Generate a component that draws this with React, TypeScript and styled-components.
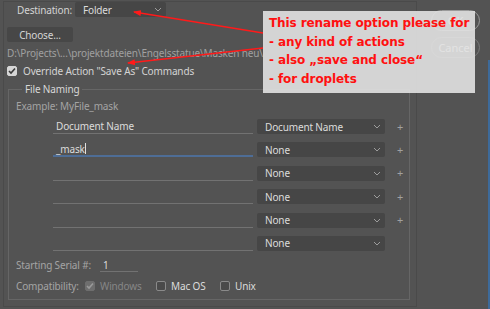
import styled, { createGlobalStyle } from 'styled-components'

const GlobalStyle = createGlobalStyle`
  html, body {
    margin: 0;
    padding: 0;
    background: #535353;
  }
`

const Screen = styled.div`
  position: relative;
  width: 490px;
  height: 309px;
  overflow: hidden;
  display: flex;
  background: #535353;
  color: #d4d4d4;
  font-family: "Noto Sans", "Open Sans", sans-serif;
  font-size: 10px;
  letter-spacing: -0.15px;
  line-height: 14px;
`

const Panel = styled.div`
  box-sizing: border-box;
  margin: 1px 0 0 3px;
  width: 414px;
  height: 306px;
  border: 1px solid #4a4a4a;
  display: flex;
  flex-direction: column;
  align-items: flex-start;
`

const DestRow = styled.div`
  display: flex;
  align-items: center;
  margin-left: 13px;
  height: 15px;
`

const Label = styled.span<{ $dim?: boolean; $w?: number }>`
  display: inline-block;
  width: ${p => (p.$w ? `${p.$w}px` : 'auto')};
  color: ${p => (p.$dim ? '#a4a4a4' : '#d4d4d4')};
  white-space: nowrap;
`

const Select = styled.div<{ $w: number }>`
  box-sizing: border-box;
  width: ${p => p.$w}px;
  height: 15px;
  padding: 0 4px 0 8px;
  display: flex;
  align-items: center;
  justify-content: space-between;
  background: #464646;
  border-radius: 2px;
  color: #dcdcdc;
`

const ChooseButton = styled.button`
  box-sizing: border-box;
  margin: 10px 0 0 3px;
  width: 66px;
  height: 15px;
  padding: 0;
  border: none;
  border-radius: 2px;
  background: #474747;
  color: #d4d4d4;
  font: inherit;
  letter-spacing: inherit;
`

const PathText = styled.div`
  margin: 4px 0 0 3px;
  color: #a0a0a0;
  white-space: nowrap;
`

const CheckRow = styled.label`
  display: flex;
  align-items: center;
  gap: 6px;
  margin: 4px 0 0 3px;
  height: 14px;
`

const Box = styled.span<{ $checked?: boolean; $disabled?: boolean }>`
  box-sizing: border-box;
  flex: none;
  width: 10px;
  height: 10px;
  border-radius: 2px;
  display: inline-flex;
  align-items: center;
  justify-content: center;
  background: ${p => (p.$disabled ? '#6e6e6e' : p.$checked ? '#d6d6d6' : '#4a4a4a')};
  border: 1px solid ${p => (p.$disabled ? '#6e6e6e' : p.$checked ? '#d6d6d6' : '#8a8a8a')};
`

const Group = styled.fieldset`
  box-sizing: border-box;
  margin: 4px 0 0 4px;
  padding: 0;
  width: 402px;
  height: 218px;
  border: 1px solid #666666;
  min-inline-size: 0;
`

const Legend = styled.legend`
  margin-left: 13px;
  padding: 0 3px;
  color: #d8d8d8;
  line-height: 14px;
`

const Example = styled.div`
  margin: 3px 0 0 7px;
  color: #a4a4a4;
`

const NameGrid = styled.div`
  display: grid;
  grid-template-columns: 200px 128px 10px;
  column-gap: 4px;
  row-gap: 8.4px;
  margin: 6px 0 0 44px;
  align-items: center;
`

const TextField = styled.div<{ $active?: boolean }>`
  box-sizing: border-box;
  height: 15px;
  padding-left: 3px;
  border-bottom: ${p => (p.$active ? '2px solid #4e6d96' : '1px solid #727272')};
  color: #dcdcdc;
  display: flex;
  align-items: center;
`

const Caret = styled.span`
  display: inline-block;
  width: 1px;
  height: 11px;
  background: #e0e0e0;
`

const Plus = styled.span`
  margin-left: 8px;
  color: #a0a0a0;
  font-size: 11px;
`

const BottomRow = styled.div`
  display: flex;
  align-items: center;
  margin: 7px 0 0 7px;
  height: 14px;
`

const SerialInput = styled.div`
  box-sizing: border-box;
  width: 38px;
  height: 14px;
  padding-left: 3px;
  border-bottom: 1px solid #727272;
  color: #dcdcdc;
`

const CompatItem = styled.span<{ $disabled?: boolean; $w?: number }>`
  display: inline-flex;
  align-items: center;
  gap: 5px;
  width: ${p => (p.$w ? `${p.$w}px` : 'auto')};
  color: ${p => (p.$disabled ? '#868686' : '#dcdcdc')};
`

const ButtonColumn = styled.div`
  display: flex;
  flex-direction: column;
  margin-left: 14px;
  width: 49px;
`

const DialogButton = styled.button<{ $primary?: boolean }>`
  box-sizing: border-box;
  height: 21px;
  margin-top: ${p => (p.$primary ? 10 : 6)}px;
  border-radius: 11px;
  border: 1px solid ${p => (p.$primary ? '#9a9a9a' : '#7a7a7a')};
  background: transparent;
  color: #e0e0e0;
  font: inherit;
  font-size: 11px;
`

const BlueEdge = styled.div`
  margin: 60px 0 0 auto;
  width: 2px;
  background: #3d6a9a;
`

const Note = styled.div`
  position: absolute;
  left: 263px;
  top: 11px;
  box-sizing: border-box;
  width: 212px;
  height: 82px;
  padding: 3px 0 0 6px;
  background: rgba(226, 226, 226, 0.9);
  color: #ff1010;
  font-family: "DejaVu Sans", Verdana, sans-serif;
  font-weight: bold;
  font-size: 12px;
  letter-spacing: -0.1px;
  line-height: 18.7px;
  white-space: nowrap;
`

const Arrows = styled.svg`
  position: absolute;
  left: 0;
  top: 0;
  pointer-events: none;
`

const Chevron = () => (
  <svg width="8" height="5" viewBox="0 0 8 5">
    <polyline points="1,1 4,4 7,1" fill="none" stroke="#9c9c9c" strokeWidth="1" />
  </svg>
)

const Check = ({ color }: { color: string }) => (
  <svg width="8" height="8" viewBox="0 0 8 8">
    <polyline points="1,4 3,6 7,1.5" fill="none" stroke={color} strokeWidth="1.6" />
  </svg>
)

const names: { text: string; select: string; active?: boolean; plus: boolean }[] = [
  { text: 'Document Name', select: 'Document Name', plus: true },
  { text: '_mask', select: 'None', active: true, plus: true },
  { text: '', select: 'None', plus: true },
  { text: '', select: 'None', plus: true },
  { text: '', select: 'None', plus: true },
  { text: '', select: 'None', plus: false },
]

export default function App() {
  return (
    <>
      <GlobalStyle />
      <Screen>
        <Panel>
          <DestRow>
            <Label $w={58}>Destination:</Label>
            <Select $w={91}>
              Folder
              <Chevron />
            </Select>
          </DestRow>
          <ChooseButton type="button">Choose...</ChooseButton>
          <PathText>D:\Projects\...\projektdateien\Engelsstatue\Masken neu\</PathText>
          <CheckRow>
            <Box $checked>
              <Check color="#3a3a3a" />
            </Box>
            <Label>Override Action "Save As" Commands</Label>
          </CheckRow>
          <Group>
            <Legend>File Naming</Legend>
            <Example>Example: MyFile_mask</Example>
            <NameGrid>
              {names.map((n, i) => (
                <>
                  <TextField key={`t${i}`} $active={n.active}>
                    {n.text}
                    {n.active && <Caret />}
                  </TextField>
                  <Select key={`s${i}`} $w={128}>
                    {n.select}
                    <Chevron />
                  </Select>
                  <Plus key={`p${i}`}>{n.plus ? '+' : ''}</Plus>
                </>
              ))}
            </NameGrid>
            <BottomRow>
              <Label $dim $w={84}>Starting Serial #:</Label>
              <SerialInput>1</SerialInput>
            </BottomRow>
            <BottomRow>
              <Label $dim $w={69}>Compatibility:</Label>
              <CompatItem $disabled $w={71}>
                <Box $disabled>
                  <Check color="#9a9a9a" />
                </Box>
                Windows
              </CompatItem>
              <CompatItem $w={64}>
                <Box />
                Mac OS
              </CompatItem>
              <CompatItem>
                <Box />
                Unix
              </CompatItem>
            </BottomRow>
          </Group>
        </Panel>
        <ButtonColumn>
          <DialogButton $primary type="button">OK</DialogButton>
          <DialogButton type="button">Cancel</DialogButton>
        </ButtonColumn>
        <BlueEdge />
        <Arrows width="490" height="309" viewBox="0 0 490 309">
          <defs>
            <marker id="head" markerWidth="8" markerHeight="6" refX="7" refY="3" orient="auto" markerUnits="userSpaceOnUse">
              <polygon points="0,0 8,3 0,6" fill="#ff1a1a" />
            </marker>
          </defs>
          <line x1="263" y1="33" x2="134" y2="12" stroke="#ff1a1a" strokeWidth="1.6" markerEnd="url(#head)" />
          <line x1="263" y1="48" x2="128" y2="63" stroke="#ff1a1a" strokeWidth="1.6" markerEnd="url(#head)" />
        </Arrows>
        <Note>
          <div>This rename option please for</div>
          <div>- any kind of actions</div>
          <div>- also „save and close“</div>
          <div>- for droplets</div>
        </Note>
      </Screen>
    </>
  )
}
